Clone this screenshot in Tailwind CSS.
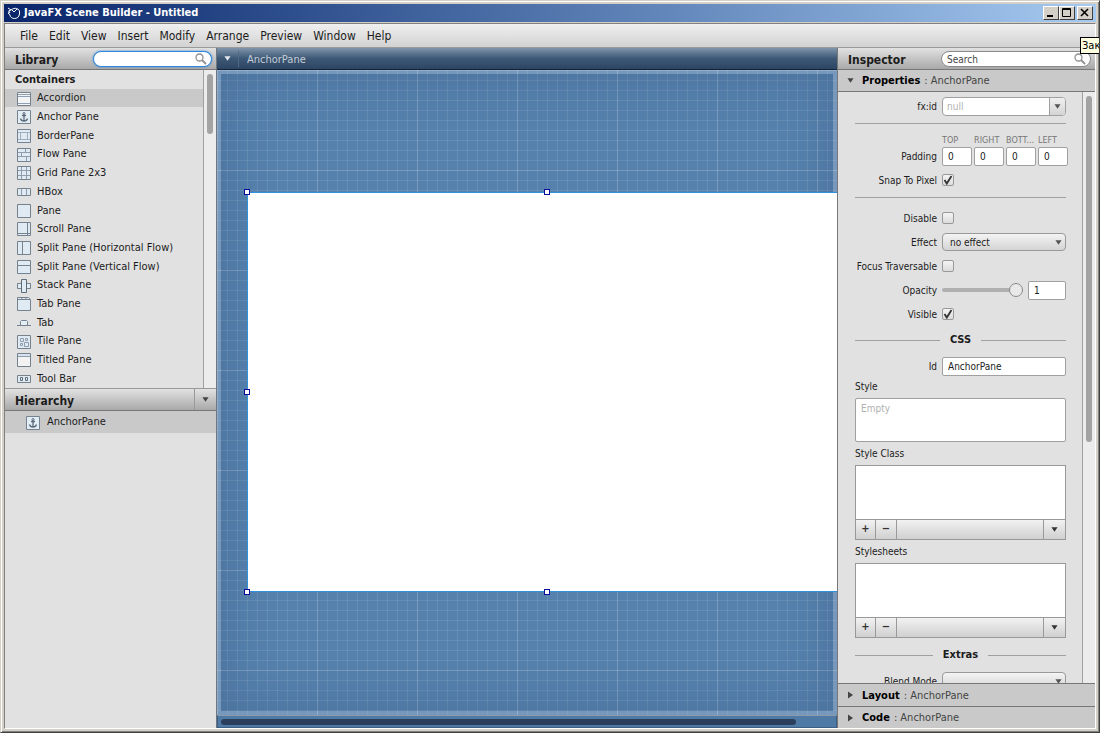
<!DOCTYPE html>
<html lang="en">
<head>
    <meta charset="UTF-8">
    <meta name="viewport" content="width=device-width, initial-scale=1.0">
    <title>JavaFX Scene Builder - Untitled</title>
    <script src="https://cdn.jsdelivr.net/npm/@tailwindcss/browser@4"></script>
</head>
<body class="font-['DejaVu_Sans_Condensed','DejaVu_Sans',sans-serif] text-[11px] text-[#1c1c1c]">
    <!-- Icons -->
    <svg class="hidden">
        <symbol id="anchor" viewBox="0 0 14 14">
            <path d="M.5 .5h13v13h-13z" fill="#e3edf6" stroke="#75828f"/>
            <path d="M7 4v7M5 5.500h4M3.500 8.500c.5 2 2 2.500 3.500 2.500s3-.5 3.500-2.500" fill="none" stroke="#5d6b7a" stroke-width="1.300"/>
            <circle cx="7" cy="3.500" r="1" fill="none" stroke="#5d6b7a"/>
        </symbol>
        <symbol id="glass" viewBox="0 0 12 12">
            <circle cx="4.500" cy="4.500" r="3.500" fill="none" stroke="#8f8f8f" stroke-width="1.300"/>
            <path d="M7 7l4 4" stroke="#8f8f8f" stroke-width="1.800"/>
        </symbol>
        <symbol id="down" viewBox="0 0 8 5"><path d="M.5 0h7L4 5z" fill="currentColor"/></symbol>
        <symbol id="right" viewBox="0 0 5 8"><path d="M0 .5v7L5 4z" fill="currentColor"/></symbol>
        <symbol id="tick" viewBox="0 0 12 12"><path d="M2.500 6l2.300 3.500L9.500 2" fill="none" stroke="#333" stroke-width="1.800"/></symbol>
    </svg>

    <div class="relative h-screen flex flex-col overflow-hidden bg-[#d4d0c8] p-1 border border-[#d4d0c8] border-r-[#404040] border-b-[#404040] shadow-[inset_1px_1px_#fff,inset_-1px_-1px_#808080]">
        <!-- Title bar -->
        <header class="h-[18px] shrink-0 -mt-px -mx-px flex items-center px-[3px] bg-linear-to-r from-[#0a246a] to-[#a6caf0]">
            <svg class="w-3.5 h-3.5 mr-[3px]" viewBox="0 0 14 14" fill="none" stroke="#fff">
                <path d="M1 2l3 2c2-1.500 4-2 5.500-1.500C12 3 13 5 12.500 8c-.5 3-2.500 4.500-5 4.500S3 11 3 9L1 7l2-.5L1.500 5 4 4M5 4l2 2 3-3"/>
            </svg>
            <h1 class="text-white font-bold grow pt-px whitespace-nowrap">JavaFX Scene Builder - Untitled</h1>
            <button aria-label="Minimize" class="w-4 h-3.5 bg-[#d4d0c8] border border-white border-r-[#404040] border-b-[#404040]">
                <svg class="w-3.5 h-3" viewBox="0 0 14 12"><path d="M3 8h6v2H3z"/></svg>
            </button>
            <button aria-label="Maximize" class="w-4 h-3.5 bg-[#d4d0c8] border border-white border-r-[#404040] border-b-[#404040]">
                <svg class="w-3.5 h-3" viewBox="0 0 14 12"><path d="M2.500 1.500h8v8h-8zM2 2.500h9" fill="none" stroke="#000"/></svg>
            </button>
            <button aria-label="Close" class="w-4 h-3.5 ml-0.5 bg-[#d4d0c8] border border-white border-r-[#404040] border-b-[#404040]">
                <svg class="w-3.5 h-3" viewBox="0 0 14 12"><path d="M3 2l7 7M10 2l-7 7" fill="none" stroke="#000" stroke-width="1.600"/></svg>
            </button>
        </header>

        <div class="grow min-h-0 -mx-px -mb-px mt-px flex flex-col border border-[#808080] border-r-white border-b-white">
            <!-- Menu -->
            <nav class="h-6 shrink-0 flex items-center gap-[11px] pt-px px-[15px] text-[12px] bg-linear-to-b from-[#f0f0f0] to-[#d2d2d2] border-b border-[#9a9a9a]">
                <button>File</button>
                <button>Edit</button>
                <button>View</button>
                <button>Insert</button>
                <button>Modify</button>
                <button>Arrange</button>
                <button>Preview</button>
                <button>Window</button>
                <button>Help</button>
            </nav>

            <div class="grow min-h-0 flex">
                <!-- Library and hierarchy -->
                <aside class="w-[212px] shrink-0 flex flex-col bg-[#e1e1e1] border-r border-[#6c7680]">
                    <div class="h-[22px] shrink-0 flex items-center justify-between pl-2.5 pr-1 bg-linear-to-b from-[#e2e2e2] to-[#a9a9a9] border-b border-[#777]">
                        <h2 class="pt-0.5 font-bold text-[12px]">Library</h2>
                        <div class="w-[119px] h-4 flex items-center rounded-full bg-white border border-[#2f86dc] shadow-[0_0_2px_#2f86dc] pr-1">
                            <input type="text" aria-label="Search library" class="grow min-w-0 pl-2 outline-none">
                            <svg class="w-3 h-3 shrink-0"><use href="#glass"/></svg>
                        </div>
                    </div>
                    <div class="h-[318px] shrink-0 flex">
                        <ul class="grow grid auto-rows-fr whitespace-nowrap border-r border-[#a0a0a0]">
                            <li class="flex items-center pt-0.5 pl-2.5 font-bold">Containers</li>
                            <li class="flex items-center gap-1.5 pt-px pl-3 bg-[#c9c9c9]">
                                <svg class="w-3.5 h-3.5" viewBox="0 0 14 14"><path d="M.5 .5h13v13h-13z" fill="#f4f4f4" stroke="#75828f"/><path d="M1 2.500h12M1 4.500h12M1 11.500h12" stroke="#8fa0b2"/></svg>
                                Accordion
                            </li>
                            <li class="flex items-center gap-1.5 pt-px pl-3">
                                <svg class="w-3.5 h-3.5"><use href="#anchor"/></svg>
                                Anchor Pane
                            </li>
                            <li class="flex items-center gap-1.5 pt-px pl-3">
                                <svg class="w-3.5 h-3.5" viewBox="0 0 14 14"><path d="M.5 .5h13v13h-13z" fill="#e0eaf3" stroke="#75828f"/><path d="M1 3.500h12M1 10.500h12M3.500 4v6M10.500 4v6" stroke="#9fb0c1"/></svg>
                                BorderPane
                            </li>
                            <li class="flex items-center gap-1.5 pt-px pl-3">
                                <svg class="w-3.5 h-3.5" viewBox="0 0 14 14"><path d="M.5 .5h13v13h-13z" fill="#e0eaf3" stroke="#75828f"/><path d="M1 4.500h12M1 8.500h12M8.500 1v3M4.500 5v3M9.500 9v4" stroke="#8d9dae"/></svg>
                                Flow Pane
                            </li>
                            <li class="flex items-center gap-1.5 pt-px pl-3">
                                <svg class="w-3.5 h-3.5" viewBox="0 0 14 14"><path d="M.5 .5h13v13h-13z" fill="#e0eaf3" stroke="#75828f"/><path d="M1 4.500h12M1 9.500h12M4.500 1v12M9.500 1v12" stroke="#8d9dae"/></svg>
                                Grid Pane 2x3
                            </li>
                            <li class="flex items-center gap-1.5 pt-px pl-3">
                                <svg class="w-3.5 h-3.5" viewBox="0 0 14 14"><path d="M.5 3.500h13v7H.5z" fill="#e0eaf3" stroke="#75828f"/><path d="M4.500 4v6M9.500 4v6" stroke="#8d9dae"/></svg>
                                HBox
                            </li>
                            <li class="flex items-center gap-1.5 pt-px pl-3">
                                <svg class="w-3.5 h-3.5" viewBox="0 0 14 14"><path d="M.5 .5h13v13h-13z" fill="#e0eaf3" stroke="#75828f"/></svg>
                                Pane
                            </li>
                            <li class="flex items-center gap-1.5 pt-px pl-3">
                                <svg class="w-3.5 h-3.5" viewBox="0 0 14 14"><path d="M.5 .5h13v13h-13z" fill="#e0eaf3" stroke="#75828f"/><path d="M10.500 1v12M1 11.500h12" stroke="#75828f"/></svg>
                                Scroll Pane
                            </li>
                            <li class="flex items-center gap-1.5 pt-px pl-3">
                                <svg class="w-3.5 h-3.5" viewBox="0 0 14 14"><path d="M.5 .5h13v13h-13z" fill="#e0eaf3" stroke="#75828f"/><path d="M5.500 1v12" stroke="#75828f"/></svg>
                                Split Pane (Horizontal Flow)
                            </li>
                            <li class="flex items-center gap-1.5 pt-px pl-3">
                                <svg class="w-3.5 h-3.5" viewBox="0 0 14 14"><path d="M.5 .5h13v13h-13z" fill="#e0eaf3" stroke="#75828f"/><path d="M1 5.500h12" stroke="#75828f"/></svg>
                                Split Pane (Vertical Flow)
                            </li>
                            <li class="flex items-center gap-1.5 pt-px pl-3">
                                <svg class="w-3.5 h-3.5" viewBox="0 0 14 14"><path d="M.5 4.500h13v5H.5z" fill="#e0eaf3" stroke="#75828f"/><path d="M4.500 .5h5v13h-5z" fill="#e0eaf3" stroke="#5f6c79"/></svg>
                                Stack Pane
                            </li>
                            <li class="flex items-center gap-1.5 pt-px pl-3">
                                <svg class="w-3.5 h-3.5" viewBox="0 0 14 14"><path d="M.5 .5h11l2 2v11H.5z" fill="#e0eaf3" stroke="#75828f"/><path d="M1 2.500h12M4.500 2l1-1.500M8.500 2l1-1.500" stroke="#75828f"/></svg>
                                Tab Pane
                            </li>
                            <li class="flex items-center gap-1.5 pt-px pl-3">
                                <svg class="w-3.5 h-3.5" viewBox="0 0 14 14"><path d="M0 9.500h14M3.500 9V5.500l1-1h5l1 1V9" fill="#e3edf6" stroke="#75828f"/></svg>
                                Tab
                            </li>
                            <li class="flex items-center gap-1.5 pt-px pl-3">
                                <svg class="w-3.5 h-3.5" viewBox="0 0 14 14"><path d="M.5 .5h13v13h-13z" fill="#e0eaf3" stroke="#75828f"/><path d="M3.500 3.500h3v3h-3zM8.500 3.500h2v2h-2zM3.500 8.500h2v2h-2zM7.500 7.500h4v4h-4z" fill="none" stroke="#8d9dae"/></svg>
                                Tile Pane
                            </li>
                            <li class="flex items-center gap-1.5 pt-px pl-3">
                                <svg class="w-3.5 h-3.5" viewBox="0 0 14 14"><path d="M.5 .5h13v13h-13z" fill="#f2f2f2" stroke="#75828f"/><path d="M1 1h12v2H1z" fill="#d7e3ef"/><path d="M1 3.500h12" stroke="#8d9dae"/></svg>
                                Titled Pane
                            </li>
                            <li class="flex items-center gap-1.5 pt-px pl-3">
                                <svg class="w-3.5 h-3.5" viewBox="0 0 14 14"><path d="M.5 3.500h13v7H.5z" fill="#e0eaf3" stroke="#75828f"/><path d="M3.500 5.500h2v3h-2zM8.500 5.500h2v3h-2z" fill="none" stroke="#5f6c79"/></svg>
                                Tool Bar
                            </li>
                        </ul>
                        <div class="w-3 shrink-0 bg-[#ececec] pt-1 px-[3px]">
                            <div class="h-[60px] rounded-full bg-[#a3a3a3]"></div>
                        </div>
                    </div>
                    <div class="h-[23px] shrink-0 flex items-center justify-between pl-2.5 bg-linear-to-b from-[#e2e2e2] to-[#a9a9a9] border-y border-t-[#999] border-b-[#777]">
                        <h2 class="pt-0.5 font-bold text-[12px]">Hierarchy</h2>
                        <button aria-label="Hierarchy options" class="w-[22px] h-full grid place-items-center border-l border-[#999] text-[#444]">
                            <svg class="w-[7px] h-[5px]"><use href="#down"/></svg>
                        </button>
                    </div>
                    <div class="h-[22px] shrink-0 flex items-center gap-[7px] pt-px pl-[21px] bg-[#c9c9c9]">
                        <svg class="w-3.5 h-3.5"><use href="#anchor"/></svg>
                        AnchorPane
                    </div>
                </aside>

                <!-- Design area -->
                <main class="grow min-w-0 flex flex-col bg-[#5581ad]">
                    <div class="h-[22px] shrink-0 flex items-center bg-linear-to-b from-[#8095aa] via-[#3d5876] to-[#2d4562] border-b border-[#132338] text-[#c5cdd6]">
                        <button aria-label="Document options" class="w-[22px] h-4 grid place-items-center border-r border-[#4f6883] text-[#e4e8ec]">
                            <svg class="w-[7px] h-[5px]"><use href="#down"/></svg>
                        </button>
                        <span class="pt-[3px] pl-2">AnchorPane</span>
                    </div>
                    <div class="relative grow min-h-0 overflow-hidden bg-[#5681ad] bg-[linear-gradient(#ffffff20_1px,transparent_1px),linear-gradient(90deg,#ffffff20_1px,transparent_1px),linear-gradient(#ffffff16_1px,transparent_1px),linear-gradient(90deg,#ffffff16_1px,transparent_1px)] bg-size-[100px_100px,100px_100px,10px_10px,10px_10px]">
                        <div class="absolute inset-0 border-4 border-[#ffffff30] shadow-[inset_0_0_50px_#1f3c6040]"></div>
                        <!-- Root pane with its handles -->
                        <div class="absolute left-[30px] right-0 top-[122px] h-[400px] bg-white border border-r-0 border-[#2f93dc]"></div>
                        <i class="absolute left-[27px] top-[119px] w-1.5 h-1.5 bg-white border border-[#0a0a9c]"></i>
                        <i class="absolute left-[327px] top-[119px] w-1.5 h-1.5 bg-white border border-[#0a0a9c]"></i>
                        <i class="absolute left-[27px] top-[319px] w-1.5 h-1.5 bg-white border border-[#0a0a9c]"></i>
                        <i class="absolute left-[27px] top-[519px] w-1.5 h-1.5 bg-white border border-[#0a0a9c]"></i>
                        <i class="absolute left-[327px] top-[519px] w-1.5 h-1.5 bg-white border border-[#0a0a9c]"></i>
                    </div>
                    <div class="h-[13px] shrink-0 pl-[3px] pr-10 py-[3px] bg-[#4f7aa6] border border-[#3d5f85] border-t-[#8c9aaa]">
                        <div class="h-1.5 rounded-full bg-[#2b3f5c]"></div>
                    </div>
                </main>

                <!-- Inspector -->
                <aside class="w-[258px] shrink-0 flex flex-col bg-[#e1e1e1] border-l border-[#777]">
                    <div class="h-[22px] shrink-0 flex items-center justify-between pl-2.5 pr-1 bg-linear-to-b from-[#e2e2e2] to-[#a9a9a9] border-b border-[#777]">
                        <h2 class="pt-0.5 font-bold text-[12px]">Inspector</h2>
                        <div class="w-[150px] h-4 flex items-center rounded-full bg-white border border-[#8a8a8a] pr-1">
                            <input type="text" aria-label="Search inspector" value="Search" class="grow min-w-0 pt-px pl-[5px] text-[10px] text-[#444] outline-none">
                            <svg class="w-3 h-3 shrink-0"><use href="#glass"/></svg>
                        </div>
                    </div>
                    <button class="h-[22px] shrink-0 flex items-center pl-[9px] bg-[#c9c9c9] border-b border-[#777] text-[#444]">
                        <svg class="w-[7px] h-[5px] mr-2"><use href="#down"/></svg>
                        <b class="pt-0.5 text-black">Properties</b><span class="pt-0.5 pl-1">: AnchorPane</span>
                    </button>

                    <div class="grow min-h-0 flex overflow-hidden">
                        <form class="grow min-w-0 pl-[17px] pr-4 pt-0.5 text-[10px] whitespace-nowrap">
                            <div class="h-6 flex items-center gap-[5px]">
                                <label for="fxid" class="w-[82px] shrink-0 text-right">fx:id</label>
                                <div class="grow h-[19px] flex rounded-sm border border-[#a0a0a0] bg-white overflow-hidden">
                                    <input id="fxid" type="text" placeholder="null" class="grow min-w-0 pl-1 placeholder:text-[#b0b0b0] outline-none">
                                    <button type="button" aria-label="Choose id" class="w-4 shrink-0 grid place-items-center border-l border-[#a0a0a0] bg-linear-to-b from-[#f0f0f0] to-[#d4d4d4] text-[#555]">
                                        <svg class="w-[7px] h-[5px]"><use href="#down"/></svg>
                                    </button>
                                </div>
                            </div>
                            <hr class="mt-[5px] border-[#a0a0a0]">
                            <div class="mt-2.5 h-2.5 ml-[87px] grid grid-cols-[repeat(4,30px)] gap-0.5 items-center text-[9px] text-[#777]">
                                <label for="top">TOP</label>
                                <label for="right-pad">RIGHT</label>
                                <label for="bottom">BOTT...</label>
                                <label for="left">LEFT</label>
                            </div>
                            <div class="h-6 flex items-center gap-[5px]">
                                <span class="w-[82px] shrink-0 text-right">Padding</span>
                                <div class="grid grid-cols-[repeat(4,30px)] gap-0.5">
                                    <input id="top" type="text" value="0" class="min-w-0 h-[19px] pl-[5px] rounded-xs border border-[#a0a0a0] bg-white">
                                    <input id="right-pad" type="text" value="0" class="min-w-0 h-[19px] pl-[5px] rounded-xs border border-[#a0a0a0] bg-white">
                                    <input id="bottom" type="text" value="0" class="min-w-0 h-[19px] pl-[5px] rounded-xs border border-[#a0a0a0] bg-white">
                                    <input id="left" type="text" value="0" class="min-w-0 h-[19px] pl-[5px] rounded-xs border border-[#a0a0a0] bg-white">
                                </div>
                            </div>
                            <div class="h-6 flex items-center gap-[5px]">
                                <label for="snap" class="w-[82px] shrink-0 text-right">Snap To Pixel</label>
                                <span class="grid">
                                    <input id="snap" type="checkbox" checked class="peer appearance-none col-start-1 row-start-1 w-3 h-3 rounded-xs border border-[#999] bg-linear-to-b from-[#f4f4f4] to-[#dcdcdc]">
                                    <svg class="hidden peer-checked:block pointer-events-none col-start-1 row-start-1 w-3 h-3"><use href="#tick"/></svg>
                                </span>
                            </div>
                            <hr class="mt-[5px] mb-2 border-[#a0a0a0]">
                            <div class="h-6 flex items-center gap-[5px]">
                                <label for="disable" class="w-[82px] shrink-0 text-right">Disable</label>
                                <input id="disable" type="checkbox" class="appearance-none w-3 h-3 rounded-xs border border-[#999] bg-linear-to-b from-[#f4f4f4] to-[#dcdcdc]">
                            </div>
                            <div class="h-6 flex items-center gap-[5px]">
                                <label for="effect" class="w-[82px] shrink-0 text-right">Effect</label>
                                <div class="grow grid items-center">
                                    <select id="effect" class="appearance-none col-start-1 row-start-1 h-[18px] pl-[7px] rounded-sm border border-[#999] bg-linear-to-b from-[#f4f4f4] to-[#d4d4d4]">
                                        <option>no effect</option>
                                    </select>
                                    <svg class="pointer-events-none col-start-1 row-start-1 justify-self-end mr-1 w-[7px] h-[5px] text-[#555]"><use href="#down"/></svg>
                                </div>
                            </div>
                            <div class="h-6 flex items-center gap-[5px]">
                                <label for="focus" class="w-[82px] shrink-0 text-right">Focus Traversable</label>
                                <input id="focus" type="checkbox" class="appearance-none w-3 h-3 rounded-xs border border-[#999] bg-linear-to-b from-[#f4f4f4] to-[#dcdcdc]">
                            </div>
                            <div class="h-6 flex items-center gap-[5px]">
                                <label for="opacity" class="w-[82px] shrink-0 text-right">Opacity</label>
                                <input id="opacity" type="range" value="100" class="grow min-w-0 appearance-none h-1 rounded-full bg-[#b0b0b0] [&::-webkit-slider-thumb]:appearance-none [&::-webkit-slider-thumb]:w-3.5 [&::-webkit-slider-thumb]:h-3.5 [&::-webkit-slider-thumb]:rounded-full [&::-webkit-slider-thumb]:border [&::-webkit-slider-thumb]:border-[#888] [&::-webkit-slider-thumb]:bg-[#e9e9e9]">
                                <input type="text" aria-label="Opacity value" value="1" class="w-[38px] h-[19px] pl-[5px] rounded-xs border border-[#a0a0a0] bg-white">
                            </div>
                            <div class="h-6 flex items-center gap-[5px]">
                                <label for="visible" class="w-[82px] shrink-0 text-right">Visible</label>
                                <span class="grid">
                                    <input id="visible" type="checkbox" checked class="peer appearance-none col-start-1 row-start-1 w-3 h-3 rounded-xs border border-[#999] bg-linear-to-b from-[#f4f4f4] to-[#dcdcdc]">
                                    <svg class="hidden peer-checked:block pointer-events-none col-start-1 row-start-1 w-3 h-3"><use href="#tick"/></svg>
                                </span>
                            </div>
                            <div class="h-7 flex items-center gap-2.5">
                                <hr class="grow border-[#a0a0a0]"><h3 class="font-bold text-[11px]">CSS</h3><hr class="grow border-[#a0a0a0]">
                            </div>
                            <div class="h-6 flex items-center gap-[5px]">
                                <label for="css-id" class="w-[82px] shrink-0 text-right">Id</label>
                                <input id="css-id" type="text" value="AnchorPane" class="grow min-w-0 h-[19px] pl-[5px] rounded-xs border border-[#a0a0a0] bg-white">
                            </div>
                            <label for="style" class="block h-5 leading-[18px]">Style</label>
                            <textarea id="style" placeholder="Empty" class="block w-full h-11 px-[5px] py-0.5 resize-none rounded-xs border border-[#a0a0a0] bg-white placeholder:text-[#b0b0b0]"></textarea>
                            <h4 class="mt-0.5 h-[21px] leading-5">Style Class</h4>
                            <div class="h-[75px] flex flex-col bg-white border border-[#999]">
                                <div class="grow"></div>
                                <div class="h-5 flex items-stretch border-t border-[#999] bg-linear-to-b from-[#f2f2f2] to-[#d0d0d0] text-[#333]">
                                    <button type="button" class="w-5 border-r border-[#999] font-bold text-[11px]">+</button>
                                    <button type="button" class="w-[21px] border-r border-[#999] font-bold text-[11px]">−</button>
                                    <button type="button" aria-label="Style class options" class="w-[22px] ml-auto grid place-items-center border-l border-[#999]">
                                        <svg class="w-[7px] h-[5px]"><use href="#down"/></svg>
                                    </button>
                                </div>
                            </div>
                            <h4 class="mt-0.5 h-[21px] leading-5">Stylesheets</h4>
                            <div class="h-[75px] flex flex-col bg-white border border-[#999]">
                                <div class="grow"></div>
                                <div class="h-5 flex items-stretch border-t border-[#999] bg-linear-to-b from-[#f2f2f2] to-[#d0d0d0] text-[#333]">
                                    <button type="button" class="w-5 border-r border-[#999] font-bold text-[11px]">+</button>
                                    <button type="button" class="w-[21px] border-r border-[#999] font-bold text-[11px]">−</button>
                                    <button type="button" aria-label="Stylesheet options" class="w-[22px] ml-auto grid place-items-center border-l border-[#999]">
                                        <svg class="w-[7px] h-[5px]"><use href="#down"/></svg>
                                    </button>
                                </div>
                            </div>
                            <div class="mt-[3px] h-7 flex items-center gap-2.5">
                                <hr class="grow border-[#a0a0a0]"><h3 class="font-bold text-[11px]">Extras</h3><hr class="grow border-[#a0a0a0]">
                            </div>
                            <div class="h-6 flex items-center gap-[5px]">
                                <label for="blend" class="w-[82px] shrink-0 text-right">Blend Mode</label>
                                <div class="grow grid items-center">
                                    <select id="blend" class="appearance-none col-start-1 row-start-1 h-[18px] pl-[7px] rounded-sm border border-[#999] bg-linear-to-b from-[#f4f4f4] to-[#d4d4d4]">
                                        <option></option>
                                    </select>
                                    <svg class="pointer-events-none col-start-1 row-start-1 justify-self-end mr-1 w-[7px] h-[5px] text-[#555]"><use href="#down"/></svg>
                                </div>
                            </div>
                        </form>
                        <div class="w-[13px] shrink-0 bg-[#ececec] border-l border-[#a0a0a0] pt-1 px-[3px]">
                            <div class="h-[346px] rounded-full bg-[#a3a3a3]"></div>
                        </div>
                    </div>

                    <button class="h-[23px] shrink-0 flex items-center pl-2.5 bg-[#c9c9c9] border-t border-[#777] text-[#444]">
                        <svg class="w-[5px] h-2 mr-[9px]"><use href="#right"/></svg>
                        <b class="pt-0.5 text-black">Layout</b><span class="pt-0.5 pl-1">: AnchorPane</span>
                    </button>
                    <button class="h-[22px] shrink-0 flex items-center pl-2.5 bg-[#c9c9c9] border-t border-[#777] text-[#444]">
                        <svg class="w-[5px] h-2 mr-[9px]"><use href="#right"/></svg>
                        <b class="pt-0.5 text-black">Code</b><span class="pt-0.5 pl-1">: AnchorPane</span>
                    </button>
                </aside>
            </div>
        </div>

        <!-- Tooltip of the close button, cut by the screen edge -->
        <div class="absolute -right-px top-9 w-5 h-[17px] overflow-hidden flex items-center pt-px pl-px bg-[#ffffe1] border border-r-0 border-black text-black">Зак</div>
    </div>
</body>
</html>
